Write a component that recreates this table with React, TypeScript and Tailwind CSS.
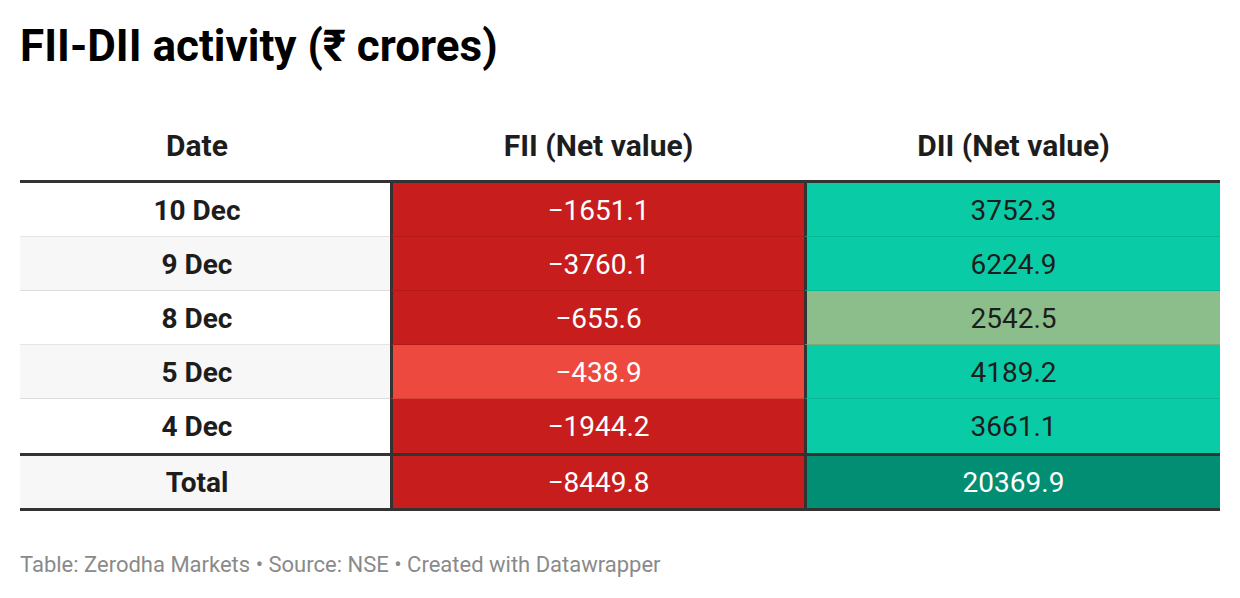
import React from 'react'

type Row = {
  date: string
  fii: string
  dii: string
  fiiBg: string
  diiBg: string
  stripe: boolean
}

const rows: Row[] = [
  { date: '10 Dec', fii: '−1651.1', dii: '3752.3', fiiBg: 'bg-[#c71e1d]', diiBg: 'bg-[#09cca6]', stripe: false },
  { date: '9 Dec', fii: '−3760.1', dii: '6224.9', fiiBg: 'bg-[#c71e1d]', diiBg: 'bg-[#09cca6]', stripe: true },
  { date: '8 Dec', fii: '−655.6', dii: '2542.5', fiiBg: 'bg-[#c71e1d]', diiBg: 'bg-[#8bbe8a]', stripe: false },
  { date: '5 Dec', fii: '−438.9', dii: '4189.2', fiiBg: 'bg-[#ee493e]', diiBg: 'bg-[#09cca6]', stripe: true },
  { date: '4 Dec', fii: '−1944.2', dii: '3661.1', fiiBg: 'bg-[#c71e1d]', diiBg: 'bg-[#09cca6]', stripe: false },
]

export default function App() {
  return (
    <div className="min-h-[598px] w-[1240px] bg-white px-5 pt-[24px] text-[#1d1d1d]" style={{ fontFamily: 'Roboto, "Liberation Sans", sans-serif' }}>
      <h1 className="text-[44px] font-bold leading-[44px] text-black">FII-DII activity (₹ crores)</h1>

      <div className="mt-[64px] w-[1200px]">
        {/* header */}
        <div className="grid grid-cols-[370px_414px_416px] pb-[20px] text-[30px] font-bold leading-[28px]">
          <div className="pr-4 text-center">Date</div>
          <div className="pl-[3px] text-center">FII (Net value)</div>
          <div className="pl-[3px] text-center">DII (Net value)</div>
        </div>

        <div className="border-t-[3px] border-[#333]">
          {rows.map((r, i) => {
            const sep = i < rows.length - 1 ? 'border-b border-b-black/10' : ''
            return (
              <div key={r.date} className="grid h-[54px] grid-cols-[370px_414px_416px] text-[28px]">
                <div className={`flex items-center justify-center pt-[2px] pr-4 font-bold ${sep} ${r.stripe ? 'bg-[#f7f7f7]' : 'bg-white'}`}>
                  {r.date}
                </div>
                <div className={`flex items-center justify-center border-l-[3px] border-l-[#333] pt-[2px] text-white ${sep} ${r.fiiBg}`}>
                  {r.fii}
                </div>
                <div className={`flex items-center justify-center border-l-[3px] border-l-[#333] pt-[2px] ${sep} ${r.diiBg}`}>
                  {r.dii}
                </div>
              </div>
            )
          })}
        </div>

        {/* total */}
        <div className="grid h-[58px] grid-cols-[370px_414px_416px] border-y-[3px] border-[#333] text-[28px]">
          <div className="flex items-center justify-center bg-[#f7f7f7] pt-[2px] pr-4 font-bold">Total</div>
          <div className="flex items-center justify-center border-l-[3px] border-[#333] bg-[#c71e1d] pt-[2px] text-white">−8449.8</div>
          <div className="flex items-center justify-center border-l-[3px] border-[#333] bg-[#018e73] pt-[2px] text-white">20369.9</div>
        </div>
      </div>

      <p className="mt-[43px] text-[22px] leading-[22px] text-[#8a8a8a]">
        Table: Zerodha Markets • Source: NSE • Created with Datawrapper
      </p>
    </div>
  )
}
